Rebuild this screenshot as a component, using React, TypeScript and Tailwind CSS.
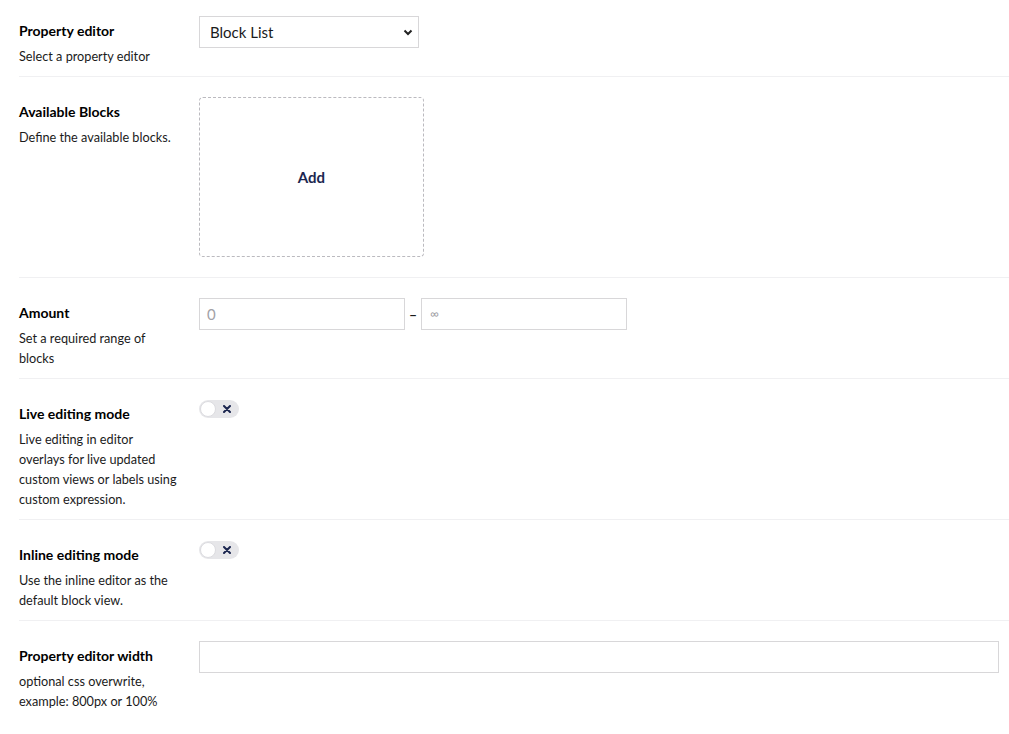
import React from "react";

const font = { fontFamily: "Lato, 'Open Sans', sans-serif" };

interface RowProps {
  label: string;
  description: string;
  first?: boolean;
  last?: boolean;
  children: React.ReactNode;
}

const Row: React.FC<RowProps> = ({ label, description, first, last, children }) => (
  <div
    className={`flex pb-[10px] ${first ? "pt-[16px]" : "pt-[20px]"} ${
      last ? "" : "border-b border-[#f0f0f2]"
    }`}
  >
    <div className="w-[180px] shrink-0 pr-[19px] pt-[5px]">
      <div className="text-[14px] font-bold leading-[20px] text-[#000]">{label}</div>
      <div className="mt-[5px] text-[12.7px] leading-[20px] text-[#1b1b1b]">{description}</div>
    </div>
    <div className="flex-1 pb-[10px] pr-[10px]">{children}</div>
  </div>
);

const Toggle: React.FC = () => (
  <div className="relative mt-[1px] h-[18px] w-[40px] rounded-full bg-[#e6e6e9]">
    <div className="absolute left-[1px] top-[1px] h-[16px] w-[16px] rounded-full border border-[#dcdce0] bg-white" />
    <svg
      className="absolute right-[8px] top-[5px]"
      width="8"
      height="8"
      viewBox="0 0 8 8"
    >
      <path d="M1 1 L7 7 M7 1 L1 7" stroke="#1b264f" strokeWidth="2" strokeLinecap="round" />
    </svg>
  </div>
);

export default function App() {
  return (
    <div className="min-h-screen bg-white pl-[19px]" style={font}>
      <Row label="Property editor" description="Select a property editor" first>
        <div className="relative flex h-[32px] w-[220px] items-center border border-[#d8d7d9] bg-white pl-[10px] text-[15px] text-[#1b1b1b]">
          Block List
          <svg
            className="absolute right-[5px] top-[12px]"
            width="10"
            height="7"
            viewBox="0 0 10 7"
          >
            <path d="M1.5 1.5 L5 5 L8.5 1.5" stroke="#222" strokeWidth="2" fill="none" />
          </svg>
        </div>
      </Row>

      <Row label="Available Blocks" description="Define the available blocks.">
        <div className="flex h-[160px] w-[225px] items-center justify-center rounded-[4px] border border-dashed border-[#bbbabf]">
          <span className="text-[15px] font-bold text-[#1b264f]">Add</span>
        </div>
      </Row>

      <Row label="Amount" description="Set a required range of blocks">
        <div className="flex items-center">
          <div className="flex h-[32px] w-[206px] items-center border border-[#d8d7d9] pl-[7px] text-[15px] text-[#a2a1a6]">
            0
          </div>
          <span className="w-[16px] text-center text-[14px] font-bold text-[#1b1b1b]">–</span>
          <div className="flex h-[32px] w-[206px] items-center border border-[#d8d7d9] pl-[8px] text-[12px] text-[#a2a1a6]">
            ∞
          </div>
        </div>
      </Row>

      <Row
        label="Live editing mode"
        description="Live editing in editor overlays for live updated custom views or labels using custom expression."
      >
        <Toggle />
      </Row>

      <Row
        label="Inline editing mode"
        description="Use the inline editor as the default block view."
      >
        <Toggle />
      </Row>

      <Row
        label="Property editor width"
        description="optional css overwrite, example: 800px or 100%"
        last
      >
        <div className="h-[32px] w-full border border-[#d8d7d9]" />
      </Row>
    </div>
  );
}
